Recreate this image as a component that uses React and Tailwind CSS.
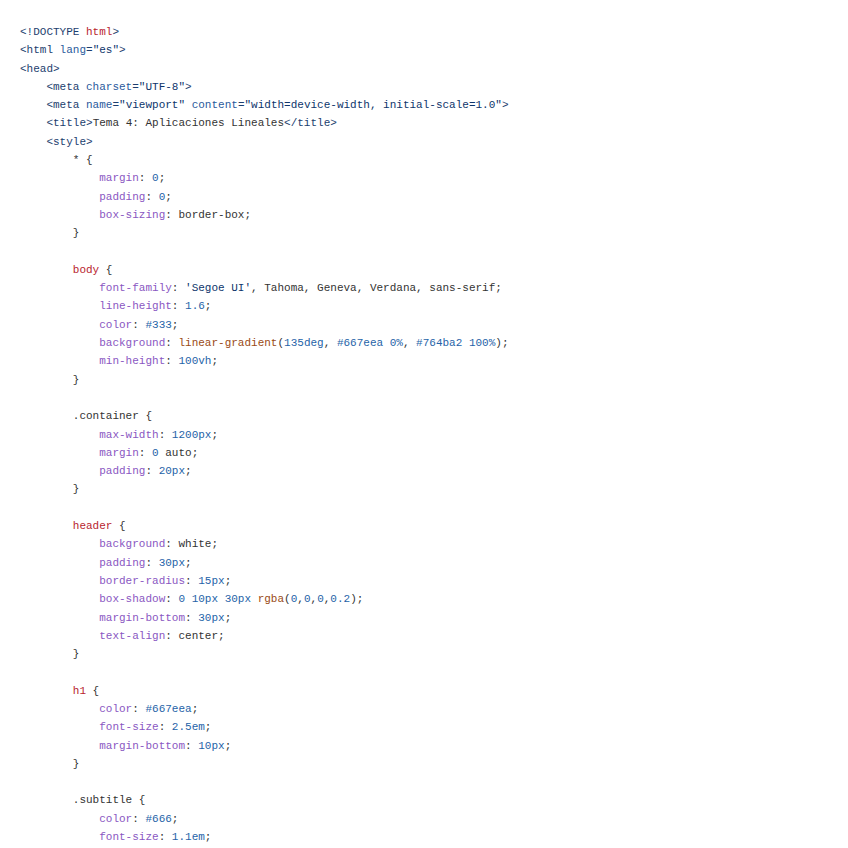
import React from "react";

const T = "text-[#1c3e6e]"; // tags
const R = "text-[#b8242e]"; // red names
const A = "text-[#2a5a9c]"; // attr names
const V = "text-[#0d356b]"; // attr values
const P = "text-[#8a57c2]"; // properties
const N = "text-[#2563a8]"; // numbers
const F = "text-[#9a4a14]"; // functions
const D = "text-[#333333]";

const s = (c, t) => ({ c, t });

const lines = [
  [s(T, "<!DOCTYPE "), s(R, "html"), s(T, ">")],
  [s(T, "<html "), s(A, "lang"), s(T, "="), s(V, '"es"'), s(T, ">")],
  [s(T, "<head>")],
  [s(D, "    "), s(T, "<meta "), s(A, "charset"), s(T, "="), s(V, '"UTF-8"'), s(T, ">")],
  [s(D, "    "), s(T, "<meta "), s(A, "name"), s(T, "="), s(V, '"viewport"'), s(D, " "), s(A, "content"), s(T, "="), s(V, '"width=device-width, initial-scale=1.0"'), s(T, ">")],
  [s(D, "    "), s(T, "<title>"), s(D, "Tema 4: Aplicaciones Lineales"), s(T, "</title>")],
  [s(D, "    "), s(T, "<style>")],
  [s(D, "        * {")],
  [s(D, "            "), s(P, "margin"), s(D, ": "), s(N, "0"), s(D, ";")],
  [s(D, "            "), s(P, "padding"), s(D, ": "), s(N, "0"), s(D, ";")],
  [s(D, "            "), s(P, "box-sizing"), s(D, ": border-box;")],
  [s(D, "        }")],
  [],
  [s(D, "        "), s(R, "body"), s(D, " {")],
  [s(D, "            "), s(P, "font-family"), s(D, ": "), s(V, "'Segoe UI'"), s(D, ", Tahoma, Geneva, Verdana, sans-serif;")],
  [s(D, "            "), s(P, "line-height"), s(D, ": "), s(N, "1.6"), s(D, ";")],
  [s(D, "            "), s(P, "color"), s(D, ": "), s(N, "#333"), s(D, ";")],
  [s(D, "            "), s(P, "background"), s(D, ": "), s(F, "linear-gradient"), s(D, "("), s(N, "135deg"), s(D, ", "), s(N, "#667eea 0%"), s(D, ", "), s(N, "#764ba2 100%"), s(D, ");")],
  [s(D, "            "), s(P, "min-height"), s(D, ": "), s(N, "100vh"), s(D, ";")],
  [s(D, "        }")],
  [],
  [s(D, "        .container {")],
  [s(D, "            "), s(P, "max-width"), s(D, ": "), s(N, "1200px"), s(D, ";")],
  [s(D, "            "), s(P, "margin"), s(D, ": "), s(N, "0"), s(D, " auto;")],
  [s(D, "            "), s(P, "padding"), s(D, ": "), s(N, "20px"), s(D, ";")],
  [s(D, "        }")],
  [],
  [s(D, "        "), s(R, "header"), s(D, " {")],
  [s(D, "            "), s(P, "background"), s(D, ": white;")],
  [s(D, "            "), s(P, "padding"), s(D, ": "), s(N, "30px"), s(D, ";")],
  [s(D, "            "), s(P, "border-radius"), s(D, ": "), s(N, "15px"), s(D, ";")],
  [s(D, "            "), s(P, "box-shadow"), s(D, ": "), s(N, "0 10px 30px"), s(D, " "), s(F, "rgba"), s(D, "("), s(N, "0"), s(D, ","), s(N, "0"), s(D, ","), s(N, "0"), s(D, ","), s(N, "0.2"), s(D, ");")],
  [s(D, "            "), s(P, "margin-bottom"), s(D, ": "), s(N, "30px"), s(D, ";")],
  [s(D, "            "), s(P, "text-align"), s(D, ": center;")],
  [s(D, "        }")],
  [],
  [s(D, "        "), s(R, "h1"), s(D, " {")],
  [s(D, "            "), s(P, "color"), s(D, ": "), s(N, "#667eea"), s(D, ";")],
  [s(D, "            "), s(P, "font-size"), s(D, ": "), s(N, "2.5em"), s(D, ";")],
  [s(D, "            "), s(P, "margin-bottom"), s(D, ": "), s(N, "10px"), s(D, ";")],
  [s(D, "        }")],
  [],
  [s(D, "        .subtitle {")],
  [s(D, "            "), s(P, "color"), s(D, ": "), s(N, "#666"), s(D, ";")],
  [s(D, "            "), s(P, "font-size"), s(D, ": "), s(N, "1.1em"), s(D, ";")],
];

export default function App() {
  return (
    <div className="w-[848px] h-[848px] overflow-hidden bg-white">
      <pre className="m-0 pl-[20px] pt-[23px] text-[11px] leading-[18.3px] text-[#333333] whitespace-pre [font-family:'Liberation_Mono',monospace]">
        {lines.map((l, i) => (
          <div key={i} className="h-[18.3px]">
            {l.map((tok, j) => (
              <span key={j} className={tok.c}>{tok.t}</span>
            ))}
          </div>
        ))}
      </pre>
    </div>
  );
}
